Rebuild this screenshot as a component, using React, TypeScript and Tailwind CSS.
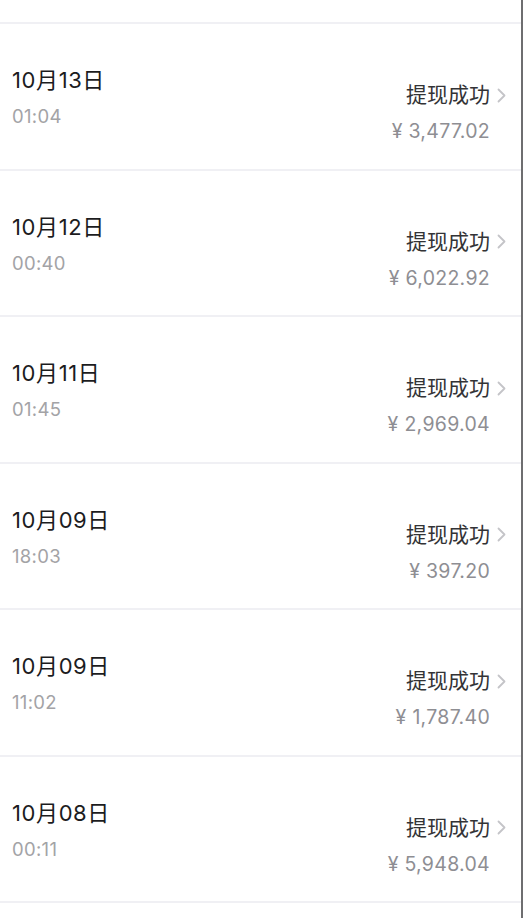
const records = [
  { date: '10月13日', time: '01:04', amount: '¥ 3,477.02' },
  { date: '10月12日', time: '00:40', amount: '¥ 6,022.92' },
  { date: '10月11日', time: '01:45', amount: '¥ 2,969.04' },
  { date: '10月09日', time: '18:03', amount: '¥ 397.20' },
  { date: '10月09日', time: '11:02', amount: '¥ 1,787.40' },
  { date: '10月08日', time: '00:11', amount: '¥ 5,948.04' },
];

function Chevron() {
  return (
    <svg width="11" height="17" viewBox="0 0 11 17" fill="none" className="shrink-0">
      <path d="M2.5 2.5l6 6-6 6" stroke="#c4c4c8" strokeWidth="1.8" strokeLinecap="round" strokeLinejoin="round" />
    </svg>
  );
}

export default function App() {
  return (
    <div
      className="w-[523px] h-[918px] overflow-hidden bg-white border-r-2 border-[#6e6e70]"
      style={{ fontFamily: 'Inter, "Noto Sans CJK SC", sans-serif' }}
    >
      <div className="h-[22px]" />
      <div className="border-t-2 border-[#f0f0f4]">
        {records.map((r, i) => (
          <div key={i} className="h-[146.5px] border-b-2 border-[#f0f0f4] flex justify-between pl-3 pr-[14px]">
            {/* left: date + time */}
            <div className="flex flex-col pt-[41px]">
              <span className="text-[22px] leading-[30px] tracking-[0.6px] text-[#1c1c1e]">{r.date}</span>
              <span className="text-[18.5px] leading-[24px] mt-[9px] tracking-[0.3px] text-[#a3a3a6]">{r.time}</span>
            </div>
            {/* right: status + amount */}
            <div className="flex flex-col items-end pt-[57px]">
              <div className="flex items-center gap-[6px]">
                <span className="text-[21px] leading-[28px] text-[#333336]">提现成功</span>
                <Chevron />
              </div>
              <span className="text-[19.5px] leading-[26px] mt-[9px] mr-[17px] tracking-[0.3px] text-[#8e8e93]">{r.amount}</span>
            </div>
          </div>
        ))}
      </div>
    </div>
  );
}
